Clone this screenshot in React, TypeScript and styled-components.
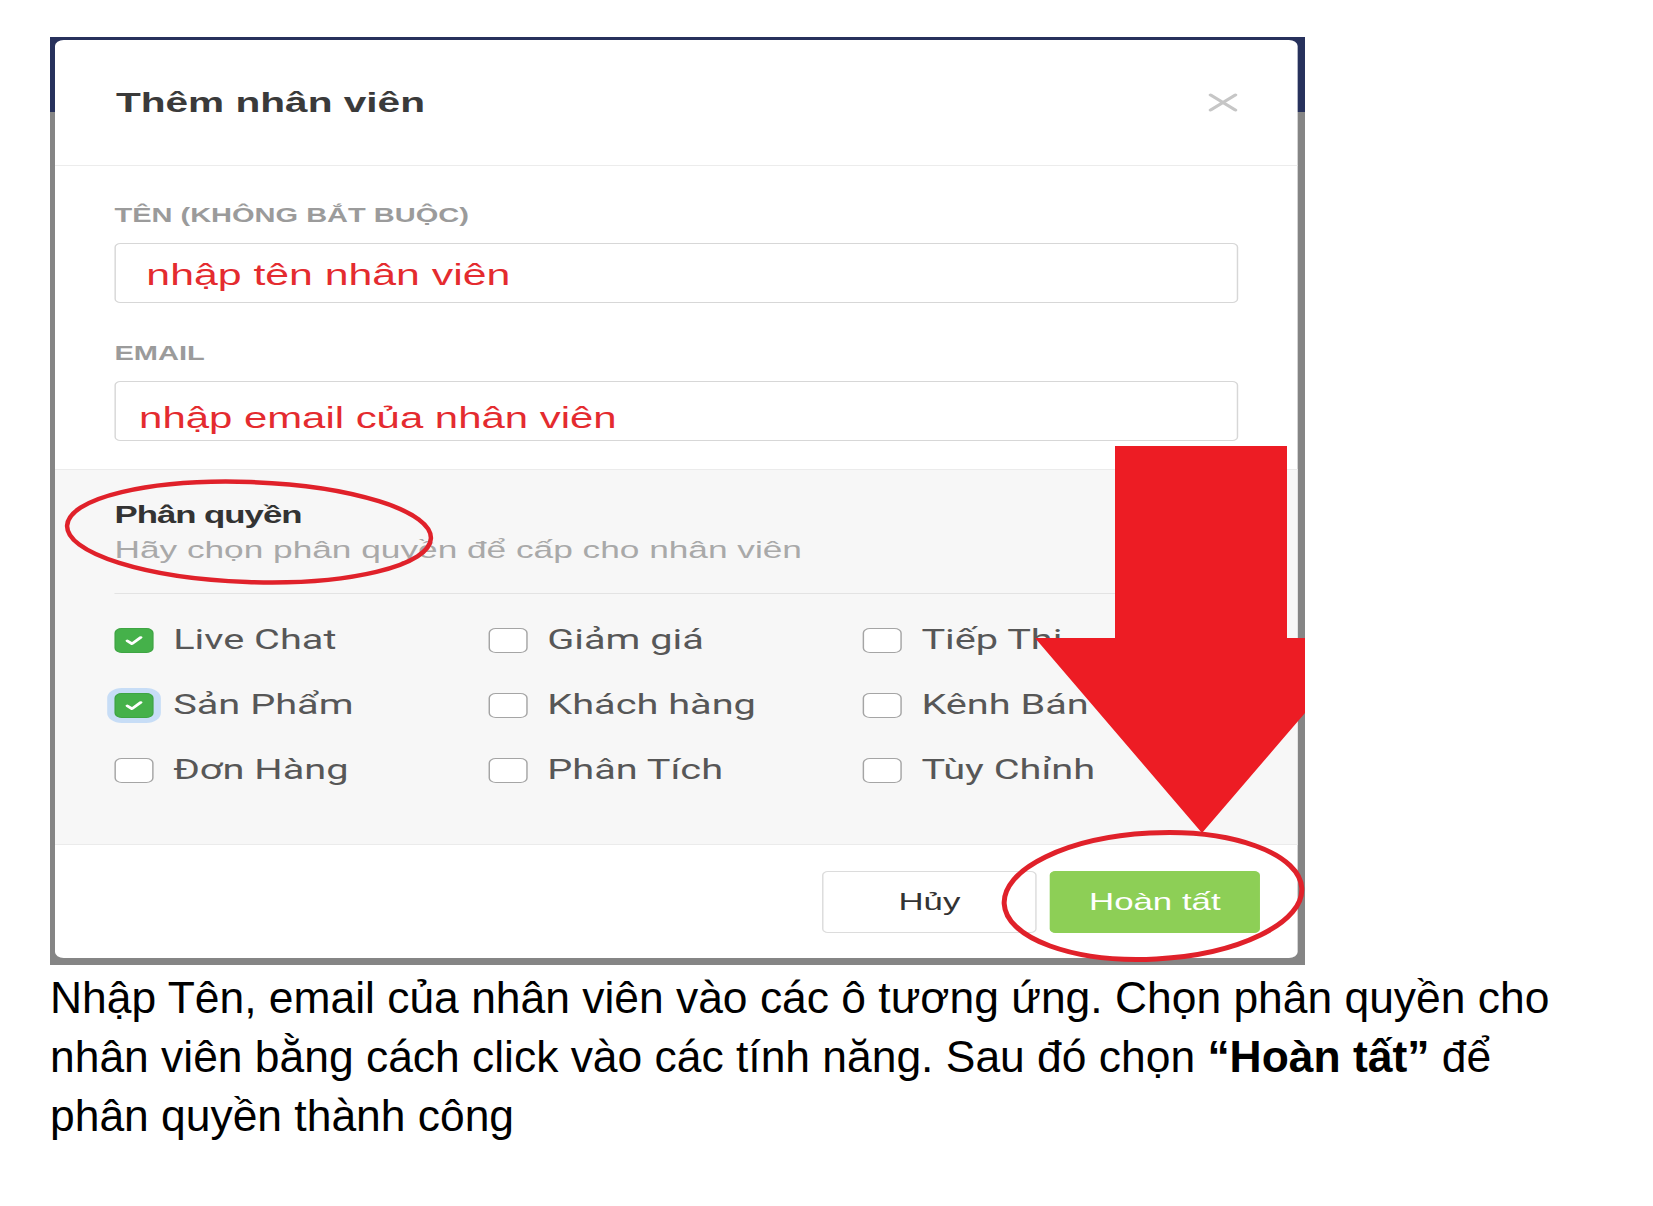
import React from "react";
import styled, { createGlobalStyle } from "styled-components";

const STRETCH = 1.45;

const GlobalStyle = createGlobalStyle`
  html, body { margin: 0; padding: 0; background: #ffffff; }
  body { font-family: "Liberation Sans", Arial, sans-serif; }
  * { box-sizing: border-box; }
`;

const Page = styled.div`
  position: relative;
  width: 1653px;
  height: 1206px;
  padding-top: 37px;
  overflow: hidden;
  background: #ffffff;
`;

const Frame = styled.div`
  margin-left: 50px;
  width: 1255px;
  height: 928px;
  padding: 3px 0 0 5px;
  background: linear-gradient(
    to bottom,
    #27315c 0,
    #27315c 75px,
    #858585 75px,
    #858585 100%
  );
`;

const Card = styled.div`
  width: 857px;
  background: #ffffff;
  border-radius: 6px;
  overflow: hidden;
  transform: scaleX(${STRETCH});
  transform-origin: 0 0;
  font-family: "Liberation Sans", Arial, sans-serif;
`;

const Header = styled.div`
  height: 126px;
  display: flex;
  align-items: center;
  justify-content: space-between;
  padding: 0 41px 0 42px;
  border-bottom: 1px solid #ececec;
`;

const Title = styled.h2`
  margin: 0;
  font-size: 28px;
  line-height: 32px;
  font-weight: 700;
  color: #3a3a3a;
`;

const CloseButton = styled.button`
  border: 0;
  padding: 0;
  background: transparent;
  width: 21px;
  height: 19px;
  display: flex;
  cursor: pointer;
`;

const Body = styled.div`
  padding: 37px 41px 28px;
  display: flex;
  flex-direction: column;
  gap: 38px;
`;

const Field = styled.div`
  display: flex;
  flex-direction: column;
  gap: 16px;
`;

const Label = styled.label`
  font-size: 20px;
  line-height: 24px;
  font-weight: 700;
  color: #9b9b9b;
`;

const InputBox = styled.div<{ $indent: number; $shift: number; $size: number }>`
  height: 60px;
  border: 1px solid #d7d7d7;
  border-radius: 4px;
  background: #ffffff;
  display: flex;
  align-items: center;
  padding-left: ${(p) => p.$indent}px;
  padding-top: ${(p) => p.$shift}px;
  font-family: "Liberation Sans", Arial, sans-serif;
  font-size: ${(p) => p.$size}px;
  color: #e42b2f;
`;

const PermSection = styled.div`
  background: #f7f7f7;
  border-top: 1px solid #ebebeb;
  border-bottom: 1px solid #ebebeb;
  padding: 31px 41px 54px;
`;

const PermTitle = styled.div`
  font-size: 24px;
  line-height: 28px;
  font-weight: 700;
  letter-spacing: -0.7px;
  color: #333333;
`;

const PermHint = styled.div`
  margin-top: 7px;
  font-size: 24.3px;
  line-height: 28px;
  color: #a9a9a9;
`;

const Divider = styled.div`
  margin-top: 29px;
  height: 1px;
  background: #e3e3e3;
`;

const PermGrid = styled.div`
  padding-top: 26px;
  display: grid;
  grid-template-columns: 258px 258px 1fr;
  grid-auto-rows: 40px;
  row-gap: 25px;
`;

const PermItem = styled.label`
  display: flex;
  align-items: center;
  gap: 13.5px;
  cursor: pointer;
`;

const Box = styled.span<{ $checked: boolean; $focused: boolean }>`
  flex: none;
  width: 27px;
  height: 25px;
  border-radius: 5px;
  display: flex;
  align-items: center;
  justify-content: center;
  background: ${(p) => (p.$checked ? "#45b14a" : "#ffffff")};
  border: ${(p) => (p.$checked ? "1px solid #3ea543" : "1.5px solid #a5a5a5")};
  box-shadow: ${(p) => (p.$focused ? "0 0 0 5px #c7ddf6" : "none")};
`;

const PermText = styled.span`
  font-family: Roboto, "Liberation Sans", Arial, sans-serif;
  font-size: 27.4px;
  line-height: 32px;
  color: #575757;
  white-space: nowrap;
`;

const Footer = styled.div`
  height: 113px;
  display: flex;
  align-items: center;
  justify-content: flex-end;
  gap: 9px;
  padding-right: 26px;
`;

const Button = styled.button<{ $primary?: boolean; $width: number }>`
  width: ${(p) => p.$width}px;
  height: 62px;
  border-radius: 4px;
  font-family: "Liberation Sans", Arial, sans-serif;
  font-size: 24px;
  cursor: pointer;
  background: ${(p) => (p.$primary ? "#8dcf56" : "#ffffff")};
  color: ${(p) => (p.$primary ? "#ffffff" : "#333333")};
  border: ${(p) => (p.$primary ? "1px solid #8dcf56" : "1px solid #dcdcdc")};
`;

const Caption = styled.p`
  margin: 3px 0 0 50px;
  font-family: "Liberation Sans", Arial, sans-serif;
  font-size: 44.4px;
  line-height: 59px;
  color: #000000;
  white-space: nowrap;
`;

const Overlay = styled.svg`
  position: absolute;
  left: 0;
  top: 0;
  pointer-events: none;
`;

type Perm = { label: string; checked?: boolean; focused?: boolean };

const perms: Perm[] = [
  { label: "Live Chat", checked: true },
  { label: "Giảm giá" },
  { label: "Tiếp Thị" },
  { label: "Sản Phẩm", checked: true, focused: true },
  { label: "Khách hàng" },
  { label: "Kênh Bán" },
  { label: "Đơn Hàng" },
  { label: "Phân Tích" },
  { label: "Tùy Chỉnh" },
];

const CheckMark = () => (
  <svg width="27" height="25" viewBox="0 0 27 25">
    <polyline
      points="8.5,12.8 12,16 18.5,9.2"
      fill="none"
      stroke="#ffffff"
      strokeWidth="2.6"
      strokeLinecap="round"
      strokeLinejoin="round"
    />
  </svg>
);

export default function App() {
  return (
    <>
      <GlobalStyle />
      <Page>
        <Frame>
          <Card>
            <Header>
              <Title>Thêm nhân viên</Title>
              <CloseButton aria-label="Đóng">
                <svg width="21" height="19" viewBox="0 0 21 19">
                  <path
                    d="M2 2 L19 17 M19 2 L2 17"
                    stroke="#c6c6c6"
                    strokeWidth="2.8"
                    strokeLinecap="round"
                  />
                </svg>
              </CloseButton>
            </Header>
            <Body>
              <Field>
                <Label>TÊN (KHÔNG BẮT BUỘC)</Label>
                <InputBox $indent={21} $shift={3} $size={29.5}>
                  nhập tên nhân viên
                </InputBox>
              </Field>
              <Field>
                <Label>EMAIL</Label>
                <InputBox $indent={16} $shift={14} $size={28.9}>
                  nhập email của nhân viên
                </InputBox>
              </Field>
            </Body>
            <PermSection>
              <PermTitle>Phân quyền</PermTitle>
              <PermHint>Hãy chọn phân quyền để cấp cho nhân viên</PermHint>
              <Divider />
              <PermGrid>
                {perms.map((p) => (
                  <PermItem key={p.label}>
                    <Box $checked={!!p.checked} $focused={!!p.focused}>
                      {p.checked && <CheckMark />}
                    </Box>
                    <PermText>{p.label}</PermText>
                  </PermItem>
                ))}
              </PermGrid>
            </PermSection>
            <Footer>
              <Button $width={148}>Hủy</Button>
              <Button $primary $width={145}>
                Hoàn tất
              </Button>
            </Footer>
          </Card>
        </Frame>
        <Caption>
          Nhập Tên, email của nhân viên vào các ô tương ứng. Chọn phân quyền cho
          <br />
          nhân viên bằng cách click vào các tính năng. Sau đó chọn{" "}
          <b>“Hoàn tất”</b> để
          <br />
          phân quyền thành công
        </Caption>
        <Overlay width="1653" height="1206" viewBox="0 0 1653 1206">
          <ellipse
            cx="249"
            cy="532"
            rx="182"
            ry="50"
            fill="none"
            stroke="#e0212a"
            strokeWidth="4.5"
            transform="rotate(2 249 532)"
          />
          <polygon
            points="1115,446 1287,446 1287,638 1305,638 1305,713 1202,833 1035,638 1115,638"
            fill="#ed1c24"
          />
          <ellipse
            cx="1153"
            cy="896"
            rx="149"
            ry="63"
            fill="none"
            stroke="#e0212a"
            strokeWidth="5"
            transform="rotate(-3 1153 896)"
          />
        </Overlay>
      </Page>
    </>
  );
}
